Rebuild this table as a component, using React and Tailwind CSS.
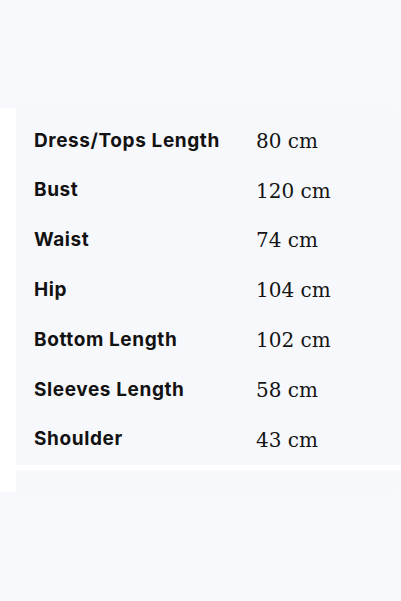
import React from 'react'

const rows = [
  { name: "Dress/Tops Length", value: "80 cm" },
  { name: "Bust", value: "120 cm" },
  { name: "Waist", value: "74 cm" },
  { name: "Hip", value: "104 cm" },
  { name: "Bottom Length", value: "102 cm" },
  { name: "Sleeves Length", value: "58 cm" },
  { name: "Shoulder", value: "43 cm" },
]

const App = () => {
  return (
    <div className="w-[401px] h-[601px] overflow-hidden bg-[#f8f9fd]">
      <div className="h-[108px]" />
      <div className="flex">
        <div className="w-4 h-[384px] bg-white" />
        <div className="flex-1 flex flex-col">
          <div className="bg-[#f7f8fc] pt-2 h-[357px] mr-[3px]">
            {rows.map((row) => (
              <div key={row.name} className="flex items-center h-[49.8px] pl-[18px]">
                <span className="w-[222px] text-[19px] font-bold text-[#121212] font-['Inter',sans-serif] tracking-[0.6px]">
                  {row.name}
                </span>
                <span className="text-[20px] text-[#141414] font-['DejaVu_Serif',serif]">
                  {row.value}
                </span>
              </div>
            ))}
          </div>
          <div className="h-[5px] bg-white" />
          <div className="flex-1 bg-[#f7f8fc] mr-[4px]" />
        </div>
      </div>
    </div>
  )
}

export default App
